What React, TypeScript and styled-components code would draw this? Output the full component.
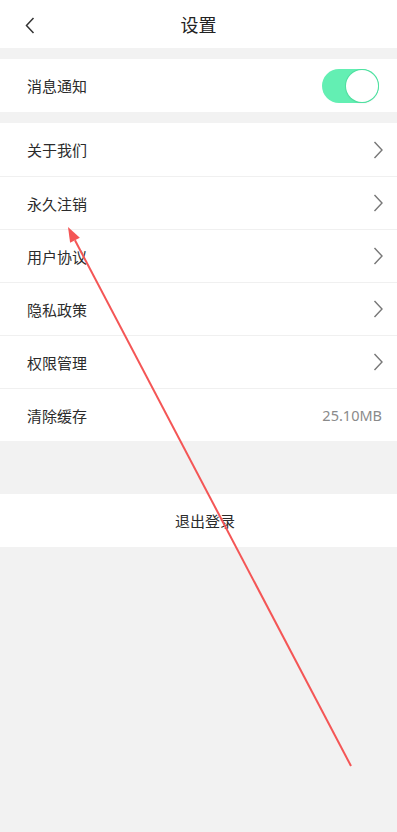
import React from "react";
import styled, { createGlobalStyle } from "styled-components";

const Global = createGlobalStyle`
  html, body { margin: 0; padding: 0; background: #f2f2f2; }
  body { font-family: "Noto Sans CJK SC", "Noto Sans", sans-serif; }
  * { box-sizing: border-box; }
`;

const Page = styled.div`
  position: relative;
  width: 397px;
  height: 832px;
  background: #f2f2f2;
  overflow: hidden;
  display: flex;
  flex-direction: column;
`;

const Header = styled.header`
  height: 48px;
  background: #fff;
  display: flex;
  align-items: center;
  justify-content: center;
  position: relative;
`;

const BackButton = styled.button`
  position: absolute;
  left: 20px;
  top: 12px;
  width: 20px;
  height: 26px;
  border: none;
  background: transparent;
  padding: 0;
  display: flex;
  align-items: center;
  justify-content: center;
`;

const Title = styled.h1`
  margin: 0;
  font-size: 18px;
  font-weight: 400;
  color: #222;
  line-height: 1;
`;

const Section = styled.section<{ $gap: number }>`
  margin-top: ${(p) => p.$gap}px;
  background: #fff;
  display: flex;
  flex-direction: column;
`;

const Row = styled.div<{ $center?: boolean }>`
  height: 53px;
  display: flex;
  align-items: center;
  justify-content: ${(p) => (p.$center ? "center" : "space-between")};
  padding: 0 14px 0 27px;
  & + & {
    border-top: 1px solid #f0f0f0;
  }
`;

const Label = styled.span`
  font-size: 15px;
  color: #2b2b2b;
  line-height: 1;
`;

const Value = styled.span`
  font-family: "Noto Sans", sans-serif;
  font-size: 14.5px;
  color: #8a8a8a;
  margin-right: 1px;
`;

const Toggle = styled.div<{ $on: boolean }>`
  width: 57px;
  height: 34px;
  border-radius: 17px;
  background: ${(p) => (p.$on ? "#63efb3" : "#ddd")};
  position: relative;
  margin-right: 4px;
`;

const Knob = styled.span`
  position: absolute;
  right: 1px;
  top: 1px;
  width: 32px;
  height: 32px;
  border-radius: 50%;
  background: #fff;
  box-shadow: 0 0 0 1px #4fe0a0, 0 1px 2px rgba(0, 0, 0, 0.12);
`;

const Overlay = styled.svg`
  position: absolute;
  left: 0;
  top: 0;
  pointer-events: none;
`;

const Chevron = ({ color = "#777" }: { color?: string }) => (
  <svg width="10" height="18" viewBox="0 0 10 18">
    <path d="M1.5 1 L9 9 L1.5 17" fill="none" stroke={color} strokeWidth="1.4" />
  </svg>
);

const items = ["关于我们", "永久注销", "用户协议", "隐私政策", "权限管理"];

export default function App() {
  // arrow geometry
  const x1 = 351, y1 = 766, x2 = 68, y2 = 227;
  const ang = Math.atan2(y2 - y1, x2 - x1);
  const len = 15, half = 5.5;
  const bx = x2 - len * Math.cos(ang), by = y2 - len * Math.sin(ang);
  const px = -Math.sin(ang) * half, py = Math.cos(ang) * half;
  const head = `${x2},${y2} ${bx + px},${by + py} ${bx - px},${by - py}`;

  return (
    <Page>
      <Global />
      <Header>
        <BackButton aria-label="返回">
          <svg width="10" height="17" viewBox="0 0 10 17">
            <path d="M8.5 1 L1.5 8.5 L8.5 16" fill="none" stroke="#333" strokeWidth="1.5" />
          </svg>
        </BackButton>
        <Title>设置</Title>
      </Header>

      <Section $gap={11}>
        <Row>
          <Label>消息通知</Label>
          <Toggle $on>
            <Knob />
          </Toggle>
        </Row>
      </Section>

      <Section $gap={11}>
        {items.map((t) => (
          <Row key={t}>
            <Label>{t}</Label>
            <Chevron />
          </Row>
        ))}
        <Row>
          <Label>清除缓存</Label>
          <Value>25.10MB</Value>
        </Row>
      </Section>

      <Section $gap={53}>
        <Row $center>
          <Label>退出登录</Label>
        </Row>
      </Section>

      <Overlay width="397" height="832" viewBox="0 0 397 832">
        <line x1={x1} y1={y1} x2={bx} y2={by} stroke="#f45656" strokeWidth="2" />
        <polygon points={head} fill="#f45656" />
      </Overlay>
    </Page>
  );
}
